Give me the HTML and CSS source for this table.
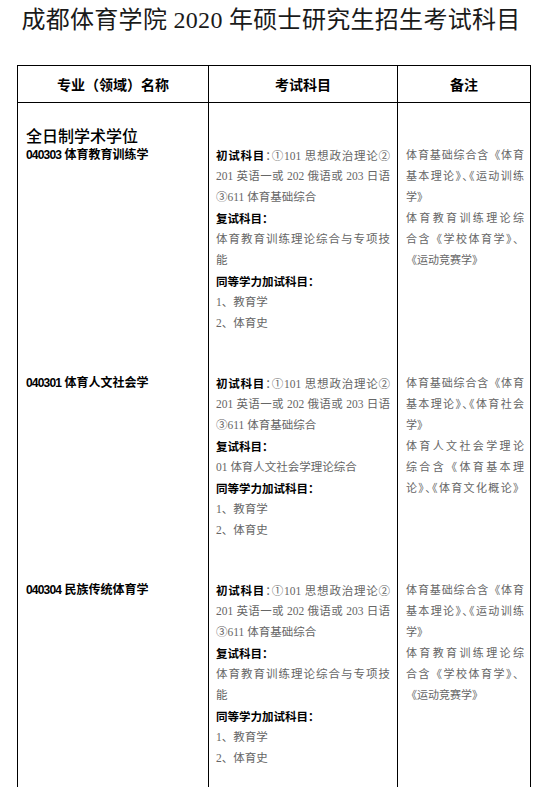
FILE: index.html
```html
<!DOCTYPE html>
<html lang="zh-CN">
<head>
<meta charset="utf-8">
<title>成都体育学院 2020 年硕士研究生招生考试科目</title>
<link rel="stylesheet" href="styles.css">
</head>
<body>
<h1 class="title">成都体育学院 2020 年硕士研究生招生考试科目</h1>
<table class="exam">
  <colgroup><col class="c1"><col class="c2"><col class="c3"></colgroup>
  <thead>
    <tr><th>专业（领域）名称</th><th>考试科目</th><th>备注</th></tr>
  </thead>
  <tbody>
    <tr class="sect"><td class="sect-name">全日制学术学位</td><td></td><td></td></tr>
    <tr class="major">
      <td class="code"><span class="code-no">040303</span> 体育教育训练学</td>
      <td class="subj">
        <span class="ln j"><b>初试科目</b><span class="halt">：</span><span class="circ">①</span>101 思想政治理论<span class="circ">②</span></span>
        <span class="ln j">201 英语一或 202 俄语或 203 日语</span>
        <span class="ln"><span class="circ">③</span>611 体育基础综合</span>
        <span class="ln"><b>复试科目：</b></span>
        <span class="ln j">体育教育训练理论综合与专项技</span>
        <span class="ln">能</span>
        <span class="ln"><b>同等学力加试科目：</b></span>
        <span class="ln">1、教育学</span>
        <span class="ln">2、体育史</span>
      </td>
      <td class="note">
        <span class="ln j">体育基础综合含《体育</span>
        <span class="ln j">基本理论<span class="halt">》、《</span>运动训练</span>
        <span class="ln">学》</span>
        <span class="ln j">体育教育训练理论综</span>
        <span class="ln j">合含《学校体育学》、</span>
        <span class="ln">《运动竞赛学》</span>
      </td>
    </tr>
    <tr class="major">
      <td class="code"><span class="code-no">040301</span> 体育人文社会学</td>
      <td class="subj">
        <span class="ln j"><b>初试科目</b><span class="halt">：</span><span class="circ">①</span>101 思想政治理论<span class="circ">②</span></span>
        <span class="ln j">201 英语一或 202 俄语或 203 日语</span>
        <span class="ln"><span class="circ">③</span>611 体育基础综合</span>
        <span class="ln"><b>复试科目：</b></span>
        <span class="ln">01 体育人文社会学理论综合</span>
        <span class="ln"><b>同等学力加试科目：</b></span>
        <span class="ln">1、教育学</span>
        <span class="ln">2、体育史</span>
      </td>
      <td class="note">
        <span class="ln j">体育基础综合含《体育</span>
        <span class="ln j">基本理论<span class="halt">》、《</span>体育社会</span>
        <span class="ln">学》</span>
        <span class="ln j">体育人文社会学理论</span>
        <span class="ln j">综合含《体育基本理</span>
        <span class="ln j">论<span class="halt">》、《</span>体育文化概论》</span>
      </td>
    </tr>
    <tr class="major">
      <td class="code"><span class="code-no">040304</span> 民族传统体育学</td>
      <td class="subj">
        <span class="ln j"><b>初试科目</b><span class="halt">：</span><span class="circ">①</span>101 思想政治理论<span class="circ">②</span></span>
        <span class="ln j">201 英语一或 202 俄语或 203 日语</span>
        <span class="ln"><span class="circ">③</span>611 体育基础综合</span>
        <span class="ln"><b>复试科目：</b></span>
        <span class="ln j">体育教育训练理论综合与专项技</span>
        <span class="ln">能</span>
        <span class="ln"><b>同等学力加试科目：</b></span>
        <span class="ln">1、教育学</span>
        <span class="ln">2、体育史</span>
      </td>
      <td class="note">
        <span class="ln j">体育基础综合含《体育</span>
        <span class="ln j">基本理论<span class="halt">》、《</span>运动训练</span>
        <span class="ln">学》</span>
        <span class="ln j">体育教育训练理论综</span>
        <span class="ln j">合含《学校体育学》、</span>
        <span class="ln">《运动竞赛学》</span>
      </td>
    </tr>
  </tbody>
</table>
</body>
</html>
```
FILE: styles.css
```css
html, body {
  margin: 0;
  background: #fff;
}

.title {
  margin: 5px 0 0;
  padding-left: 3px;
  font: 400 24px/30px "Liberation Serif", "Noto Sans CJK SC", serif;
  letter-spacing: 0.3px;
  text-align: center;
  color: #1a1a1a;
}

.exam {
  margin: 30px 0 0 17px;
  border-collapse: collapse;
  table-layout: fixed;
  width: 513px;
}

.c1 { width: 191px; }
.c2 { width: 189px; }
.c3 { width: 133px; }

.exam th {
  border: 1px solid #000;
  height: 36px;
  padding: 0;
  font: 700 14px/20px "Noto Sans CJK SC", sans-serif;
  color: #000;
  text-align: center;
  vertical-align: middle;
}

.exam td {
  border-left: 1px solid #000;
  border-right: 1px solid #000;
  vertical-align: top;
  padding: 0 8px 39px 8px;
}

.sect td {
  padding: 22px 8px 0 8px;
}

.sect-name {
  font: 500 16px/20px "Noto Sans CJK SC", sans-serif;
  color: #000;
}

.code {
  font: 700 12px/21px "Liberation Sans", "Noto Sans CJK SC", sans-serif;
  color: #000;
}

.code-no {
  letter-spacing: -0.8px;
}

.exam td.subj {
  padding-left: 7px;
  padding-right: 7px;
  font: 400 11.5px/21px "Liberation Serif", "Noto Sans CJK SC", serif;
  color: #666;
}

.subj b {
  font-family: "Noto Sans CJK SC", sans-serif;
  font-weight: 700;
  color: #000;
}

.circ {
  font-family: "Noto Sans CJK SC", sans-serif;
  line-height: 1;
}

.exam td.note {
  padding-left: 8px;
  padding-right: 6px;
  font: 400 11px/21px "Liberation Serif", "Noto Sans CJK SC", serif;
  color: #666;
}

.ln {
  display: block;
  height: 21px;
}

.j {
  text-align: justify;
  text-align-last: justify;
}

.halt {
  font-feature-settings: "halt";
}
```
